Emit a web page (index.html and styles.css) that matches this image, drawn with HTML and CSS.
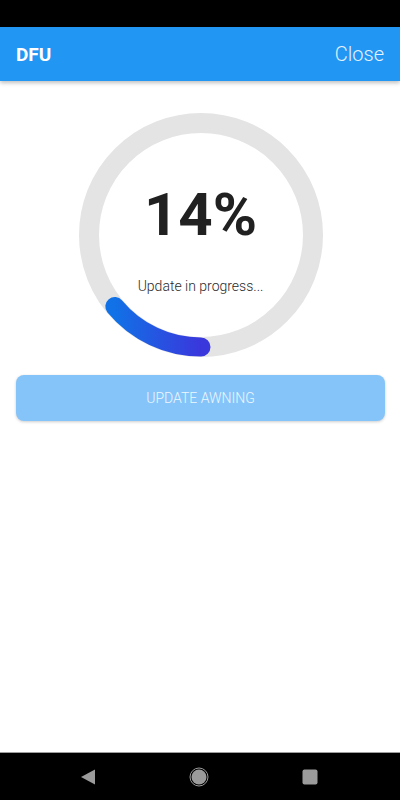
FILE: index.html
```html
<!DOCTYPE html>
<html lang="en">
<head>
  <meta charset="UTF-8">
  <meta name="viewport" content="width=device-width, initial-scale=1">
  <title>DFU</title>
  <link rel="stylesheet" href="styles.css">
</head>
<body>
  <div class="phone">
    <div class="status-bar"></div>
    <header class="app-bar">
      <h1 class="app-title">DFU</h1>
      <span class="app-action">Close</span>
    </header>

    <main class="content">
      <div class="progress">
        <svg class="progress-ring" width="244" height="244" viewBox="0 0 244 244">
          <defs>
            <linearGradient id="arcGrad" x1="0" y1="0" x2="1" y2="0">
              <stop offset="0" stop-color="#1171e6"/>
              <stop offset="1" stop-color="#3a37dc"/>
            </linearGradient>
          </defs>
          <circle cx="122" cy="122" r="112" fill="none" stroke="#e4e4e4" stroke-width="20"/>
          <!-- 14% arc, starting at the bottom and running clockwise -->
          <path d="M 122 234 A 112 112 0 0 1 35.8 193.5" fill="none" stroke="url(#arcGrad)" stroke-width="19" stroke-linecap="round"/>
        </svg>
        <div class="progress-label">
          <div class="percent">14%</div>
          <div class="status-text">Update in progress...</div>
        </div>
      </div>

      <button class="update-btn" disabled>UPDATE AWNING</button>
    </main>

    <nav class="nav-bar">
      <svg width="16" height="16" viewBox="0 0 16 16"><path d="M15 0.5 L15 15.5 L1 8 Z" fill="#9b9b9b"/></svg>
      <svg width="20" height="20" viewBox="0 0 20 20">
        <circle cx="10" cy="10" r="9" fill="none" stroke="#9b9b9b" stroke-width="1"/>
        <circle cx="10" cy="10" r="7.5" fill="#9b9b9b"/>
      </svg>
      <svg width="16" height="16" viewBox="0 0 16 16"><rect x="0.5" y="0.5" width="15" height="15" rx="2" fill="#9b9b9b"/></svg>
    </nav>
  </div>
</body>
</html>
```

FILE: styles.css
```css
body {
  margin: 0;
  padding: 0;
  background: #fff;
  font-family: Roboto, 'Noto Sans', Arial, sans-serif;
  color: #222;
}

.phone {
  width: 400px;
  height: 800px;
  display: flex;
  flex-direction: column;
  overflow: hidden;
}

.status-bar {
  height: 27px;
  background: #000;
}

/* Top app bar */
.app-bar {
  height: 54px;
  background: #2196f3;
  display: flex;
  align-items: center;
  justify-content: space-between;
  padding: 0 16px;
  box-shadow: 0 2px 4px rgba(0,0,0,0.25);
  position: relative;
  z-index: 1;
}

.app-title {
  margin: 0;
  font-size: 19px;
  font-weight: 700;
  color: #fff;
}

.app-action {
  font-size: 20px;
  font-weight: 300;
  color: #e6f2fd;
}

.content {
  flex: 1;
  display: flex;
  flex-direction: column;
  align-items: center;
  padding: 32px 15px 0 16px;
}

/* Circular progress */
.progress {
  display: grid;
  width: 244px;
  height: 244px;
}

.progress-ring,
.progress-label {
  grid-area: 1 / 1;
}

.progress-label {
  display: flex;
  flex-direction: column;
  align-items: center;
  padding-top: 67px;
}

.percent {
  font-size: 60px;
  font-weight: 700;
  line-height: 70px;
  color: #212121;
}

.status-text {
  margin-top: 28px;
  font-size: 14px;
  font-weight: 300;
  color: #2a2a2a;
}

.update-btn {
  margin-top: 18px;
  width: 100%;
  height: 46px;
  border: none;
  border-radius: 8px;
  background: #85c4f9;
  color: #eef6fe;
  font-family: Roboto, Arial, sans-serif;
  font-size: 14px;
  font-weight: 300;
  box-shadow: 0 1px 3px rgba(0,0,0,0.2);
}

/* Android navigation bar */
.nav-bar {
  height: 47px;
  background: #000;
  border-top: 1px solid #9e9e9e;
  display: flex;
  align-items: center;
  justify-content: center;
  gap: 93px;
  padding-right: 2px;
}
```
